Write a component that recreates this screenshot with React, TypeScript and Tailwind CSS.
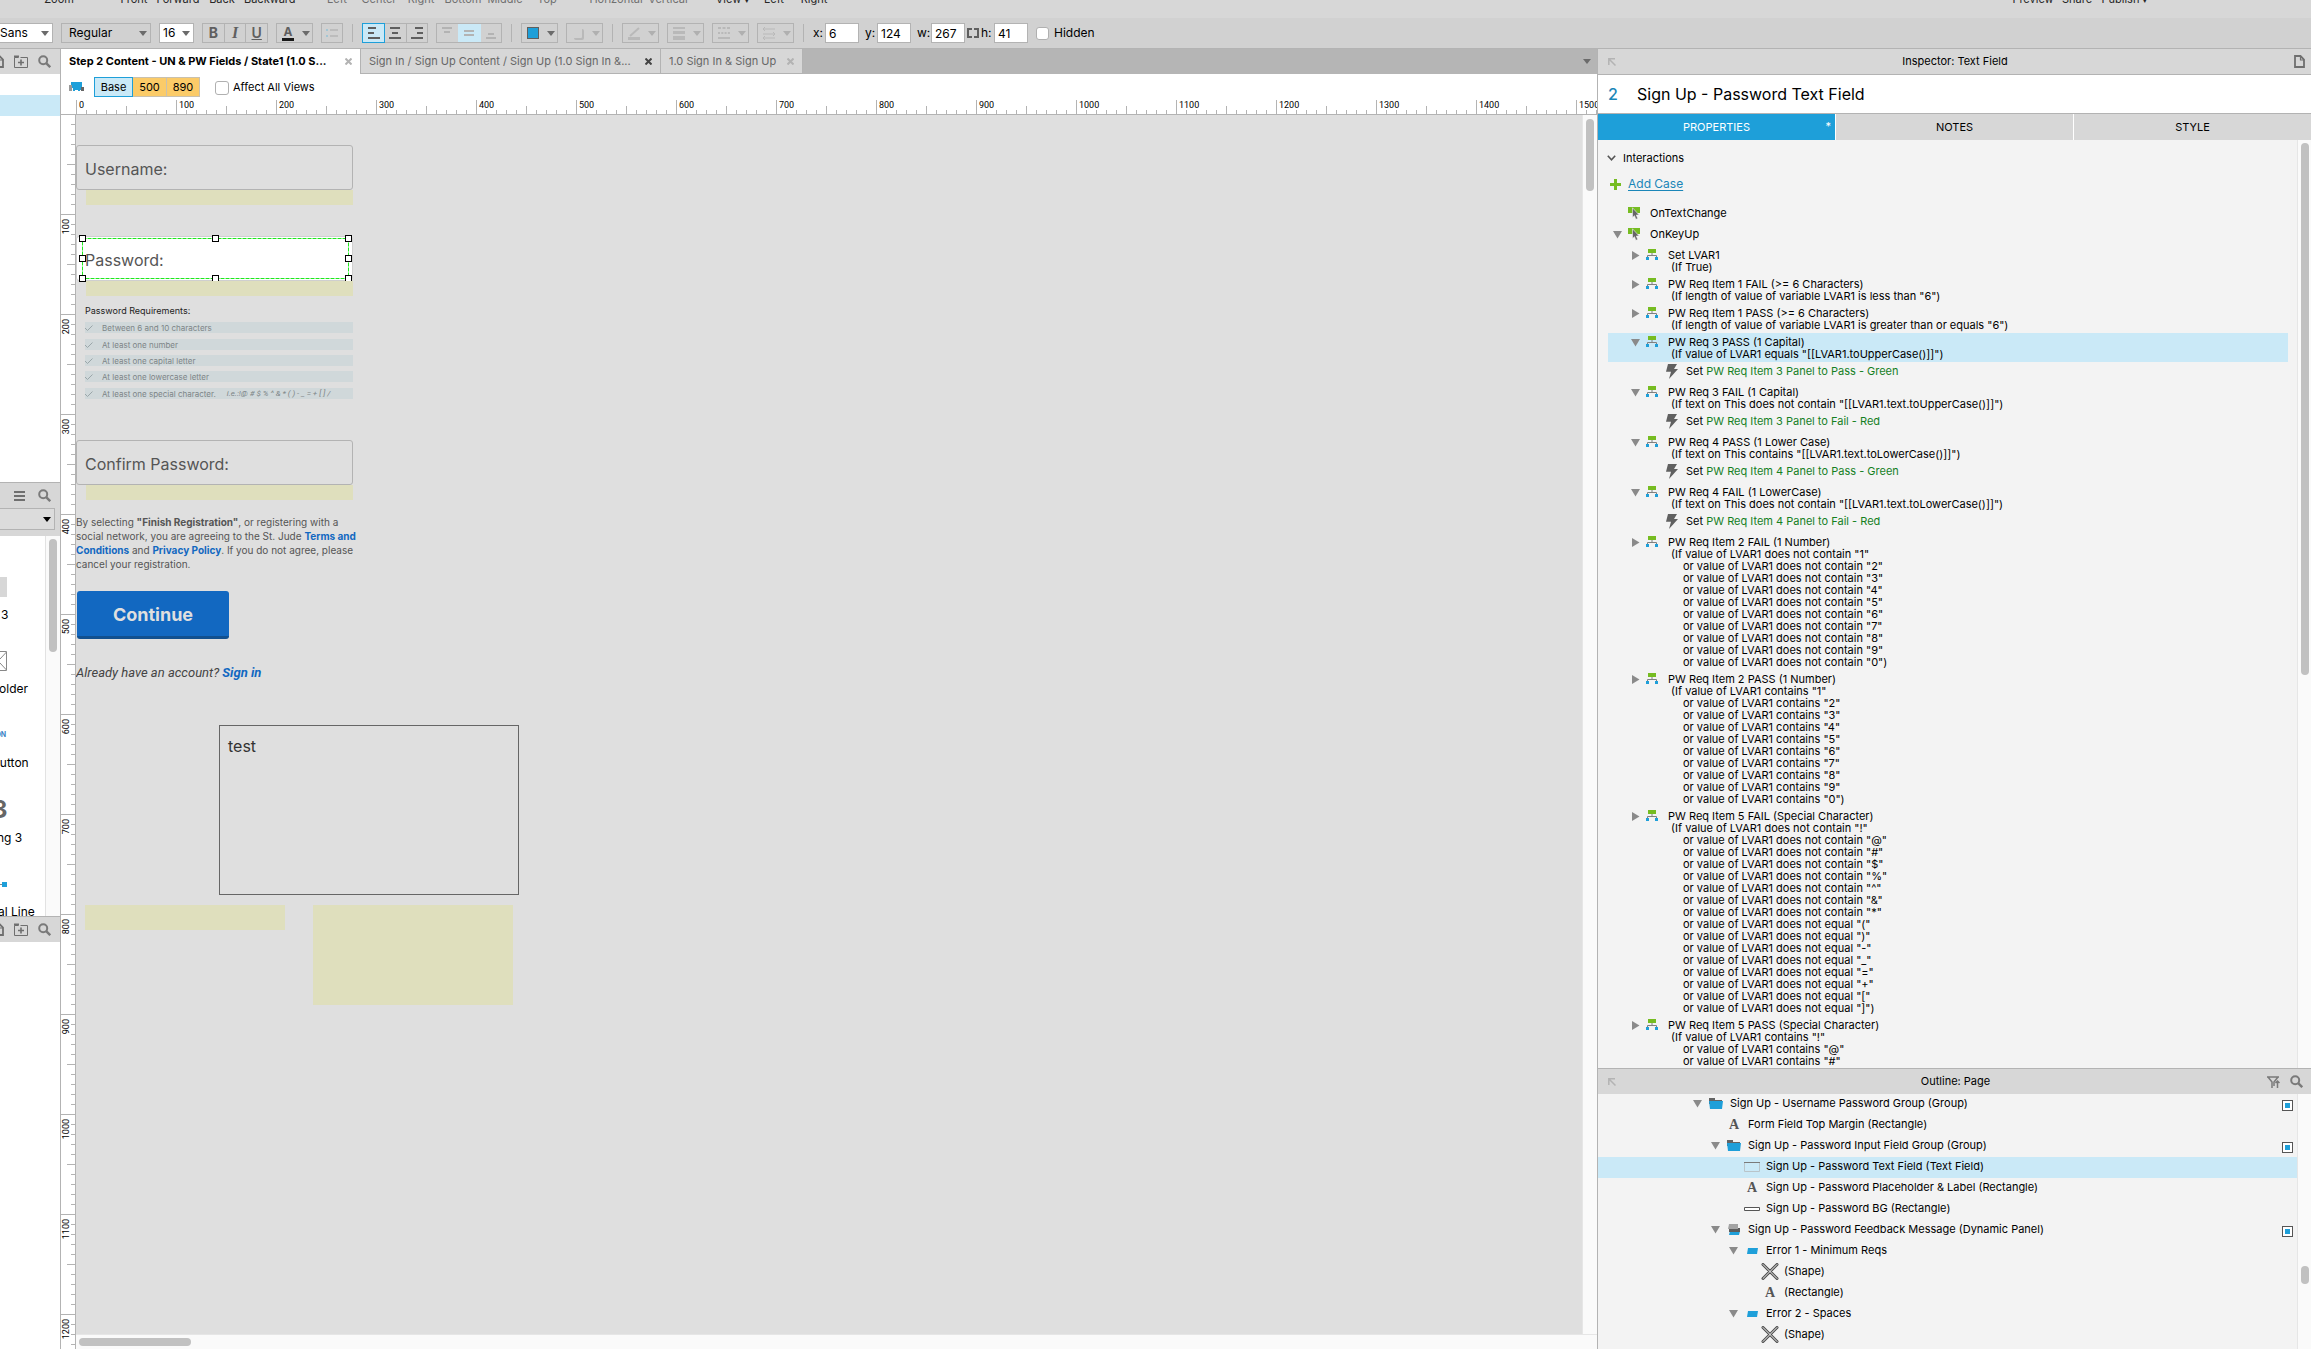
import type { ReactNode } from "react";

const dark = "text-[#262626]";
const muted = "text-[#6f6f6f]";

const rulerX = Array.from({ length: 16 }, (_, i) => i * 100);
const rulerY = Array.from({ length: 13 }, (_, i) => i * 100);

type Case = {
    title: string;
    lines: string[];
    action?: string;
    selected?: boolean;
};

const digits = ["1", "2", "3", "4", "5", "6", "7", "8", "9", "0"];

const cases: Case[] = [
    { title: "Set LVAR1", lines: ["(If True)"] },
    {
        title: "PW Req Item 1 FAIL (>= 6 Characters)",
        lines: ['(If length of value of variable LVAR1 is less than "6")'],
    },
    {
        title: "PW Req Item 1 PASS (>= 6 Characters)",
        lines: ['(If length of value of variable LVAR1 is greater than or equals "6")'],
    },
    {
        title: "PW Req 3 PASS (1 Capital)",
        lines: ['(If value of LVAR1 equals "[[LVAR1.toUpperCase()]]")'],
        action: "PW Req Item 3 Panel to Pass - Green",
        selected: true,
    },
    {
        title: "PW Req 3 FAIL (1 Capital)",
        lines: ['(If text on This does not contain "[[LVAR1.text.toUpperCase()]]")'],
        action: "PW Req Item 3 Panel to Fail - Red",
    },
    {
        title: "PW Req 4 PASS (1 Lower Case)",
        lines: ['(If text on This contains "[[LVAR1.text.toLowerCase()]]")'],
        action: "PW Req Item 4 Panel to Pass - Green",
    },
    {
        title: "PW Req 4 FAIL (1 LowerCase)",
        lines: ['(If text on This does not contain "[[LVAR1.text.toLowerCase()]]")'],
        action: "PW Req Item 4 Panel to Fail - Red",
    },
    {
        title: "PW Req Item 2 FAIL (1 Number)",
        lines: digits.map(
            (d, i) => `${i === 0 ? "(If" : "or"} value of LVAR1 does not contain "${d}"${i === 9 ? ")" : ""}`,
        ),
    },
    {
        title: "PW Req Item 2 PASS (1 Number)",
        lines: digits.map((d, i) => `${i === 0 ? "(If" : "or"} value of LVAR1 contains "${d}"${i === 9 ? ")" : ""}`),
    },
    {
        title: "PW Req Item 5 FAIL (Special Character)",
        lines: [
            '(If value of LVAR1 does not contain "!"',
            ...["@", "#", "$", "%", "^", "&", "*"].map((c) => `or value of LVAR1 does not contain "${c}"`),
            ...["(", ")", "-", "_", "=", "+", "["].map((c) => `or value of LVAR1 does not equal "${c}"`),
            'or value of LVAR1 does not equal "]")',
        ],
    },
    {
        title: "PW Req Item 5 PASS (Special Character)",
        lines: [
            '(If value of LVAR1 contains "!"',
            'or value of LVAR1 contains "@"',
            'or value of LVAR1 contains "#"',
        ],
    },
];

const requirements = [
    { text: "Between 6 and 10 characters", top: "top-[207px]" },
    { text: "At least one number", top: "top-[224px]" },
    { text: "At least one capital letter", top: "top-[240px]" },
    { text: "At least one lowercase letter", top: "top-[256px]" },
    { text: "At least one special character.", top: "top-[273px]", note: "i.e.:!@ # $ % ^ & * ( ) - _ = + [ ] /" },
];

const handles = [
    "left-[3px] top-[120px]",
    "left-[136px] top-[120px]",
    "left-[269px] top-[120px]",
    "left-[3px] top-[140px]",
    "left-[269px] top-[140px]",
    "left-[3px] top-[160px]",
    "left-[136px] top-[160px]",
    "left-[269px] top-[160px]",
];

/* ---------- Icons ---------- */

function Caret({ className = "text-[#6b6b6b]" }: { className?: string }) {
    return (
        <svg className={`pointer-events-none ${className}`} width="8" height="5" viewBox="0 0 8 5" fill="currentColor">
            <path d="M0 0h8L4 5z" />
        </svg>
    );
}

function TreeArrow({ open }: { open?: boolean }) {
    return (
        <svg width="9" height="9" viewBox="0 0 9 9" fill="#8a8a8a" className="shrink-0">
            {open ? <path d="M0 1h9L4.500 8.500z" /> : <path d="M1 0v9L8.500 4.500z" />}
        </svg>
    );
}

function SearchIcon() {
    return (
        <svg width="13" height="13" viewBox="0 0 13 13" fill="none" stroke="#7a7a7a" strokeWidth="2" className="shrink-0">
            <circle cx="5.200" cy="5.200" r="4" />
            <path d="M8.200 8.200l4 4" strokeWidth="2.400" />
        </svg>
    );
}

function FolderPlusIcon() {
    return (
        <svg width="14" height="13" viewBox="0 0 14 13" fill="none" stroke="#6f6f6f" className="shrink-0">
            <path d="M.5 12.500V2.500h4M.5 12.500h13v-10h-7" />
            <path d="M0 1.500h5" strokeWidth="2" />
            <path d="M7 4.500v6M4 7.500h6" strokeWidth="1.600" />
        </svg>
    );
}

function PageIcon() {
    return (
        <svg width="11" height="13" viewBox="0 0 11 13" fill="none" stroke="#6f6f6f" strokeWidth="1.800" className="shrink-0">
            <path d="M1 1h5.500L10 4.500V12H1z" />
            <path d="M6.500 1v4H10" strokeWidth="1.200" />
        </svg>
    );
}

function PopOutIcon() {
    return (
        <svg width="8" height="8" viewBox="0 0 8 8" fill="none" stroke="#b3b3b3" strokeWidth="1.500">
            <path d="M.8 7V.8H7M1 1l6.500 6.500" />
        </svg>
    );
}

function CaseIcon() {
    return (
        <svg width="12" height="11" viewBox="0 0 12 11" className="shrink-0">
            <path d="M2 0h8v4H2z" fill="#76bc21" />
            <path d="M1.500 8V6.500h9V8M6 4v2.500" fill="none" stroke="#808080" />
            <path d="M0 8h3v3H0zM9 8h3v3H9z" fill="#1e9fd9" />
        </svg>
    );
}

function EventIcon() {
    return (
        <svg width="12" height="13" viewBox="0 0 12 13" className="shrink-0">
            <path d="M0 0h12v6H0z" fill="#76bc21" />
            <path
                d="M4.500.8v9.800l2-1.900 1.300 3.600 2-.8-1.500-3.500h2.900z"
                fill="#666"
                stroke="#f3f3f3"
                strokeWidth=".6"
            />
        </svg>
    );
}

function BoltIcon() {
    return (
        <svg width="12" height="15" viewBox="0 0 12 15" fill="#606060" className="shrink-0">
            <path d="M2 0h9L8 5h4L3 15l2-7.200H0z" />
        </svg>
    );
}

function FolderIcon() {
    return (
        <svg width="14" height="11" viewBox="0 0 14 11" className="shrink-0">
            <path d="M0 0h6v2h7v4H0z" fill="#636363" />
            <path d="M0 3h14l-1 8H1z" fill="#1e9fd9" />
        </svg>
    );
}

function ShapeIcon() {
    return (
        <svg width="18" height="17" viewBox="0 0 18 17" className="shrink-0" strokeLinecap="round">
            <path d="M2 1.500l14 14M16 1.500l-14 14" stroke="#4d4d4d" strokeWidth="3" />
            <path d="M2 1.500l14 14M16 1.500l-14 14" stroke="#f3f3f3" strokeWidth="1" />
        </svg>
    );
}

function PanelIcon() {
    return (
        <svg width="12" height="11" viewBox="0 0 12 11" className="shrink-0">
            <path d="M2 7h10l-1 4H1z" fill="#1e9fd9" />
            <path d="M1 4h11v4H1z" fill="#5c5c5c" />
            <path d="M1 0h9v5H0z" fill="#a3a3a3" />
        </svg>
    );
}

function StateIcon() {
    return (
        <svg width="11" height="6" viewBox="0 0 11 6" className="shrink-0">
            <path d="M1 0h10l-1 6H0z" fill="#1e9fd9" />
        </svg>
    );
}

function TextFieldIcon() {
    return (
        <svg width="16" height="10" viewBox="0 0 16 10" className="shrink-0" fill="none">
            <path d="M.5 0v9.500h15V0" stroke="#b9c4c9" />
            <path d="M0 .5h16" stroke="#7a7a7a" />
        </svg>
    );
}

function RectIcon() {
    return (
        <svg width="16" height="4" viewBox="0 0 16 4" className="shrink-0">
            <path d="M.5.5h15v3H.5z" fill="#fff" stroke="#555" />
        </svg>
    );
}

function LetterIcon() {
    return <span className="font-['Liberation_Serif'] text-sm leading-none font-bold text-[#555]">A</span>;
}

/* ---------- Toolbar parts ---------- */

function Separator() {
    return <div className="mx-px h-[18px] w-px bg-[#b3b3b3]" />;
}

function Drop({ children, label }: { children: ReactNode; label: string }) {
    const off = label !== "Text color" && label !== "Fill color";
    return (
        <button
            aria-label={label}
            className="flex h-5 w-[37px] items-center justify-between border border-[#b3b3b3] pr-[2px] pl-1"
        >
            {children}
            <Caret className={off ? "text-[#b0b0b0]" : "text-[#6b6b6b]"} />
        </button>
    );
}

function Picker({ value, label, box }: { value: string; label: string; box: string }) {
    return (
        <div className={`relative flex h-5 items-center border border-[#b3b3b3] ${box}`}>
            <select aria-label={label} className="h-full w-full appearance-none bg-transparent text-xs outline-none">
                <option>{value}</option>
            </select>
            <Caret className="absolute right-[3px] text-[#6b6b6b]" />
        </div>
    );
}

function AlignIcon({ d }: { d: string }) {
    return (
        <svg width="12" height="12" viewBox="0 0 12 12" fill="none" stroke="currentColor" strokeWidth="2">
            <path d={d} />
        </svg>
    );
}

function NumberBox({ id, value, width }: { id: string; value: string; width: string }) {
    return (
        <>
            <label htmlFor={id} className={`text-xs ${width}`}>
                {id}:
            </label>
            <input
                id={id}
                defaultValue={value}
                className="h-5 w-[34px] border border-[#b3b3b3] bg-white pl-[3px] text-xs outline-none"
            />
        </>
    );
}

function Toolbar() {
    return (
        <div className="flex h-[31px] shrink-0 items-center gap-2 overflow-hidden border-b border-[#b3b3b3] bg-[#d1d1d1]">
            <Picker value="Sans" label="Font" box="w-[53px] bg-white border-l-0" />
            <Picker value="Regular" label="Font style" box="w-[90px] pl-[7px]" />
            <Picker value="16" label="Font size" box="w-[35px] bg-white pl-[3px]" />
            <div className="flex h-5 w-[66px] divide-x divide-[#b3b3b3] border border-[#b3b3b3] text-sm leading-none text-[#5f5f5f]">
                <button className="flex-1 font-bold">B</button>
                <button className="flex-1 font-['Liberation_Serif'] text-base leading-none font-bold italic">I</button>
                <button className="flex-1 font-semibold underline">U</button>
            </div>
            <Drop label="Text color">
                <span className="ml-[1px] w-3 border-b-3 border-[#1a1a1a] text-xs leading-[13px] font-bold text-[#5f5f5f]">
                    A
                </span>
            </Drop>
            <button aria-label="Bullets" className="flex h-5 w-[22px] items-center justify-center border border-[#b3b3b3]">
                <svg width="12" height="10" viewBox="0 0 12 10" fill="none" stroke="#b5b5b5" strokeWidth="1.500">
                    <path d="M4 2h8M4 8h8" />
                    <path d="M0 2h2M0 8h2" stroke="#a3c6d4" strokeWidth="2" />
                </svg>
            </button>
            <Separator />
            <div className="flex h-5 w-[66px] border border-[#b3b3b3] text-[#5f5f5f]">
                <button
                    aria-label="Align left"
                    className="-my-px -ml-px flex w-[23px] items-center justify-center border border-[#1e9fd9] bg-[#cae9f7]"
                >
                    <AlignIcon d="M0 1h8M0 6h6M0 11h12" />
                </button>
                <button aria-label="Align center" className="flex flex-1 items-center justify-center">
                    <AlignIcon d="M1 1h10M3 6h6M0 11h12" />
                </button>
                <button aria-label="Align right" className="flex flex-1 items-center justify-center border-l border-[#b3b3b3]">
                    <AlignIcon d="M4 1h8M6 6h6M0 11h12" />
                </button>
            </div>
            <div className="flex h-5 w-[66px] border border-[#b3b3b3] text-[#b3b3b3]">
                <button aria-label="Align top" className="flex flex-1 items-center justify-center">
                    <AlignIcon d="M1 1h10M3 5h6" />
                </button>
                <button aria-label="Align middle" className="flex w-[23px] items-center justify-center bg-[#cae9f7]">
                    <AlignIcon d="M1 4h10M1 8h10" />
                </button>
                <button aria-label="Align bottom" className="flex flex-1 items-center justify-center">
                    <AlignIcon d="M3 7h6M1 11h10" />
                </button>
            </div>
            <Separator />
            <Drop label="Fill color">
                <span className="ml-[1px] size-3 border border-[#5f5f5f] bg-[#1e9fd9]" />
            </Drop>
            <Drop label="Shadow">
                <svg width="14" height="13" viewBox="0 0 14 13">
                    <rect x="3" y="2" width="10" height="11" rx="2" fill="#b9b9b9" />
                    <rect x="1" y="0" width="10" height="11" rx="1" fill="#d1d1d1" />
                </svg>
            </Drop>
            <Separator />
            <Drop label="Line color">
                <svg width="14" height="13" viewBox="0 0 14 13" fill="none" stroke="#b9b9b9">
                    <path d="M1 11.500h12" strokeWidth="3" />
                    <path d="M3 9l9-8" strokeWidth="2" />
                </svg>
            </Drop>
            <Drop label="Line width">
                <svg width="14" height="13" viewBox="0 0 14 13" fill="#b9b9b9">
                    <path d="M1 0h12v2H1zM1 4h12v3H1zM1 9h12v4H1z" />
                </svg>
            </Drop>
            <Drop label="Line style">
                <svg width="14" height="13" viewBox="0 0 14 13" fill="none" stroke="#b9b9b9" strokeWidth="2">
                    <path d="M1 1h12" strokeDasharray="3 1.500" />
                    <path d="M1 6h12" strokeDasharray="2 1.300" />
                    <path d="M1 11h12" />
                </svg>
            </Drop>
            <Drop label="Arrow style">
                <svg width="14" height="13" viewBox="0 0 14 13" fill="none" stroke="#b9b9b9">
                    <path d="M1 2h12M1 7h12M1 11h12M3 0L1 2l2 2M11 5l2 2-2 2M3 9l-2 2 2 2" />
                </svg>
            </Drop>
            <Separator />
            <div className="flex items-center">
                <NumberBox id="x" value="6" width="w-3" />
                <div className="w-[6px]" />
                <NumberBox id="y" value="124" width="w-3" />
                <div className="w-[6px]" />
                <NumberBox id="w" value="267" width="w-[14px]" />
                <svg width="12" height="10" viewBox="0 0 12 10" fill="none" stroke="#5f5f5f" strokeWidth="2" className="mx-[2px] shrink-0">
                    <path d="M5 1H1v8h4M7 1h4v8H7" />
                </svg>
                <NumberBox id="h" value="41" width="w-[13px]" />
            </div>
            <label className="flex items-center gap-[5px] text-xs">
                <input
                    type="checkbox"
                    className="size-[13px] appearance-none rounded-[3px] border border-[#b0b0b0] bg-white"
                />
                Hidden
            </label>
        </div>
    );
}

function MenuLabels() {
    return (
        <div className="flex h-[18px] shrink-0 overflow-hidden bg-[#d7d7d7] text-[11px] leading-[14px]">
            <div className={`-mt-2 ml-[37px] flex text-center ${dark}`}>
                <span className="mr-[31px] w-11">Zoom</span>
                <span className="w-11">Front</span>
                <span className="w-11">Forward</span>
                <span className="w-11">Back</span>
                <span className="w-[50px]">Backward</span>
            </div>
            <div className={`-mt-2 ml-[22px] flex text-center ${muted}`}>
                {["Left", "Center", "Right", "Bottom", "Middle", "Top"].map((t) => (
                    <span key={t} className="w-[42px]">
                        {t}
                    </span>
                ))}
                <span className="ml-5 w-14">Horizontal</span>
                <span className="w-12">Vertical</span>
            </div>
            <div className={`-mt-2 ml-5 flex text-center ${dark}`}>
                <span className="w-[42px]">View ▾</span>
                <span className="w-10">Left</span>
                <span className="w-10">Right</span>
            </div>
            <div className={`-mt-2 mr-[160px] ml-auto flex text-center ${dark}`}>
                <span className="w-11">Preview</span>
                <span className="w-11">Share</span>
                <span className="w-[52px]">Publish ▾</span>
            </div>
        </div>
    );
}

/* ---------- Left side panels ---------- */

function LeftPanel() {
    return (
        <aside className="flex w-[61px] shrink-0 flex-col overflow-hidden border-r border-[#b3b3b3] bg-white text-xs">
            <div className="flex h-[25px] shrink-0 items-center justify-end gap-[10px] bg-[#d7d7d7] pr-[9px]">
                <PageIcon />
                <FolderPlusIcon />
                <SearchIcon />
            </div>
            <div className="mt-[21px] h-[21px] shrink-0 bg-[#cae9f7]" />
            <div className="h-[366px] shrink-0" />
            <div className="flex h-[54px] shrink-0 flex-col border-t border-[#b3b3b3] bg-[#d7d7d7]">
                <div className="flex h-[25px] items-center justify-end gap-[13px] pr-[9px]">
                    <svg width="11" height="10" viewBox="0 0 11 10" fill="none" stroke="#6f6f6f" strokeWidth="1.800">
                        <path d="M0 1h11M0 5h11M0 9h11" />
                    </svg>
                    <SearchIcon />
                </div>
                <button
                    aria-label="Library"
                    className="flex h-[22px] w-[55px] items-center justify-end border border-l-0 border-[#b3b3b3] bg-[#dcdcdc] pr-[3px]"
                >
                    <Caret className="text-black" />
                </button>
            </div>
            <div className="flex h-[380px] shrink-0">
                <div className="flex w-[45px] shrink-0 flex-col items-start overflow-hidden leading-4 whitespace-nowrap">
                    <div className="mt-[41px] h-5 w-[7px] shrink-0 bg-[#d7d7d7]" />
                    <p className="mt-[10px] ml-px">3</p>
                    <svg width="7" height="20" viewBox="0 0 7 20" fill="none" stroke="#888" className="mt-[28px] shrink-0">
                        <path d="M0 .5h6.500v19H0M0 8l6.500-7M0 12l6.500 7" />
                    </svg>
                    <p className="mt-[10px] -ml-2">holder</p>
                    <p className="mt-[32px] -ml-[9px] text-[7px] leading-[12px] font-bold text-[#3b82c4]">TON</p>
                    <p className="mt-[14px] -ml-2">Button</p>
                    <p className="mt-[27px] -ml-2 text-2xl leading-6 font-bold text-[#666]">3</p>
                    <p className="mt-[8px] -ml-[3px]">ng 3</p>
                    <div className="mt-[36px] flex items-center">
                        <div className="h-px w-[2px] bg-[#888]" />
                        <div className="size-[5px] bg-[#1e9fd9]" />
                    </div>
                    <p className="mt-[17px] -ml-[2px]">al Line</p>
                </div>
                <div className="w-[15px] border-l border-[#e2e2e2] bg-[#fafafa] pt-[3px] pl-[3px]">
                    <div className="h-[113px] w-2 rounded-full bg-[#c1c1c1]" />
                </div>
            </div>
            <div className="flex h-[26px] shrink-0 items-center justify-end gap-[10px] border-t border-[#b3b3b3] bg-[#d7d7d7] pr-[9px]">
                <PageIcon />
                <FolderPlusIcon />
                <SearchIcon />
            </div>
        </aside>
    );
}

/* ---------- Centre: tabs, rulers, canvas ---------- */

function Tab({ text, active, strong, width }: { text: string; active?: boolean; strong?: boolean; width: string }) {
    return (
        <div
            className={`flex items-center justify-between border-r border-[#b3b3b3] pr-2 pl-2 ${width} ${
                active ? "bg-white font-bold text-black" : "border-b bg-[#d7d7d7] text-[#666]"
            }`}
        >
            <button className="whitespace-nowrap">{text}</button>
            <svg
                width="7"
                height="7"
                viewBox="0 0 7 7"
                fill="none"
                stroke={strong ? "#444" : "#b3b3b3"}
                strokeWidth="2"
                className="shrink-0"
            >
                <path d="M.5.5l6 6M6.500.5l-6 6" />
            </svg>
        </div>
    );
}

function HorizontalRuler() {
    return (
        <div className="ml-[15px] flex h-[14px] overflow-hidden font-[Roboto] text-[9px] leading-[10px]">
            {rulerX.map((n) => (
                <div key={n} className="relative w-[100px] shrink-0 border-l border-[#b3b3b3] pl-[2px]">
                    {n}
                    <svg width="99" height="14" className="absolute top-0 left-0" stroke="#b3b3b3">
                        <path d="M9.500 10v4M19.500 10v4M29.500 10v4M39.500 10v4M49.500 6v8M59.500 10v4M69.500 10v4M79.500 10v4M89.500 10v4" />
                    </svg>
                </div>
            ))}
        </div>
    );
}

function VerticalRuler() {
    return (
        <div className="w-[14px] shrink-0 overflow-hidden bg-white font-[Roboto] text-[9px] leading-[10px]">
            {rulerY.map((n) => (
                <div key={n} className="relative h-[100px] border-t border-[#b3b3b3]">
                    {n > 0 && <span className="mt-1 block rotate-180 [writing-mode:vertical-rl]">{n}</span>}
                    <svg width="14" height="99" className="absolute top-0 left-0" stroke="#b3b3b3">
                        <path d="M10 9.500h4M10 19.500h4M10 29.500h4M10 39.500h4M6 49.500h8M10 59.500h4M10 69.500h4M10 79.500h4M10 89.500h4" />
                    </svg>
                </div>
            ))}
        </div>
    );
}

function Canvas() {
    const field =
        "absolute left-0 h-[45px] w-[277px] rounded-[3px] border pt-[2px] pl-2 text-base text-[#555] outline-none";
    return (
        <div className="relative min-w-0 flex-1 overflow-hidden bg-[#dfdfdf]">
            <input aria-label="Username" defaultValue="Username:" className={`${field} top-[30px] border-[#b3b3b3]`} />
            <div className="absolute top-[75px] left-[10px] h-[15px] w-[267px] bg-[#dfdfbd]" />

            {/* Selected password field with its handles */}
            <input
                aria-label="Password"
                defaultValue="Password:"
                className={`${field} top-[121px] border-[#cfcfcf] bg-white`}
            />
            <svg width="267" height="41" className="absolute top-[123px] left-[6px]" fill="none" stroke="#1fe81f">
                <rect x=".5" y=".5" width="266" height="40" strokeDasharray="4 1" />
            </svg>
            {handles.map((h) => (
                <div key={h} className={`absolute size-[7px] border border-black bg-white ${h}`} />
            ))}
            <div className="absolute top-[166px] left-[10px] h-[15px] w-[267px] bg-[#dfdfbd]" />

            <p className="absolute top-[189px] left-[9px] text-[9px] leading-[14px] text-[#222]">Password Requirements:</p>
            {requirements.map((r) => (
                <div
                    key={r.text}
                    className={`absolute left-[9px] flex h-[11px] w-[268px] items-center bg-[#d0d8da] pt-px text-[8px] leading-[10px] whitespace-nowrap text-[#7d8587] ${r.top}`}
                >
                    <svg width="8" height="6" viewBox="0 0 8 6" fill="none" stroke="#9aa6a9" className="mr-[9px]">
                        <path d="M0 3l2.500 2.500L7.500.5" />
                    </svg>
                    {r.text}
                    {r.note && <span className="ml-[11px] font-[Roboto] italic">{r.note}</span>}
                </div>
            ))}

            <input
                aria-label="Confirm password"
                defaultValue="Confirm Password:"
                className={`${field} top-[325px] border-[#b3b3b3]`}
            />
            <div className="absolute top-[370px] left-[10px] h-[15px] w-[267px] bg-[#dfdfbd]" />

            <p className="absolute top-[400px] left-0 text-[10px] leading-[14px] whitespace-nowrap text-[#555]">
                By selecting <b>"Finish Registration"</b>, or registering with a
                <br />
                social network, you are agreeing to the St. Jude{" "}
                <a href="#terms" className="font-bold text-[#1268c1]">
                    Terms and
                    <br />
                    Conditions
                </a>{" "}
                and{" "}
                <a href="#privacy" className="font-bold text-[#1268c1]">
                    Privacy Policy
                </a>
                . If you do not agree, please
                <br />
                cancel your registration.
            </p>

            <button className="absolute top-[476px] left-[1px] h-12 w-[152px] rounded-[3px] border-b-3 border-[#11508f] bg-[#1268c1] pt-[3px] text-lg font-bold text-[#dfdfdf]">
                Continue
            </button>
            <p className="absolute top-[549px] left-0 font-[Roboto] text-[13px] leading-[18px] text-[#444] italic">
                Already have an account?{" "}
                <a href="#signin" className="font-bold text-[#1268c1]">
                    Sign in
                </a>
            </p>

            <textarea
                aria-label="Test"
                defaultValue="test"
                className="absolute top-[610px] left-[143px] h-[170px] w-[300px] resize-none border border-[#666] px-2 pt-2 text-base text-[#333] outline-none"
            />
            <div className="absolute top-[790px] left-[9px] h-[25px] w-[200px] bg-[#dfdfbd]" />
            <div className="absolute top-[790px] left-[237px] h-[100px] w-[200px] bg-[#dfdfbd]" />
        </div>
    );
}

function Workspace() {
    return (
        <main className="flex min-w-0 flex-1 flex-col bg-white">
            <div className="flex h-[25px] shrink-0 bg-[#b5b5b5] text-[11px]">
                <Tab active width="w-[300px]" text="Step 2 Content - UN & PW Fields / State1 (1.0 S..." />
                <Tab strong width="w-[300px]" text="Sign In / Sign Up Content / Sign Up (1.0 Sign In &..." />
                <Tab width="w-[142px]" text="1.0 Sign In & Sign Up" />
                <button aria-label="All tabs" className="mr-[6px] ml-auto">
                    <Caret />
                </button>
            </div>
            <div className="flex h-[26px] shrink-0 items-center pl-2 text-[11px]">
                <svg width="15" height="10" viewBox="0 0 15 10">
                    <path d="M2 0h11v6H2z" fill="#1e9fd9" />
                    <path d="M4 6h8v2H4zM4 8h2v1H4zM9 8h2v1H9z" fill="#1e9fd9" />
                    <path d="M0 3h3v6H0z" fill="#999" />
                    <path d="M12 5h3v4h-3z" fill="#666" />
                </svg>
                <div className="ml-[10px] flex h-5 text-center">
                    <button className="w-[39px] border border-[#1e9fd9] bg-[#cae9f7]">Base</button>
                    <button className="w-[34px] border-y border-r border-[#c9c1ae] bg-[#fbcb68]">500</button>
                    <button className="w-[33px] border-y border-r border-[#c9c1ae] bg-[#fbcb68]">890</button>
                </div>
                <label className="ml-[15px] flex items-center gap-1 pt-px">
                    <input
                        type="checkbox"
                        className="size-[14px] appearance-none rounded-[3px] border border-[#b0b0b0] bg-white"
                    />
                    Affect All Views
                </label>
            </div>
            <HorizontalRuler />
            <div className="flex min-h-0 flex-1">
                <VerticalRuler />
                <div className="flex min-w-0 flex-1 flex-col border-t border-l border-[#b3b3b3]">
                    <div className="flex min-h-0 flex-1">
                        <Canvas />
                        <div className="w-[15px] shrink-0 border-l border-[#e6e6e6] bg-[#fafafa] pt-1 pl-[3px]">
                            <div className="h-[72px] w-2 rounded-full bg-[#c1c1c1]" />
                        </div>
                    </div>
                    <div className="h-[15px] shrink-0 border-t border-[#e6e6e6] bg-[#fafafa] pt-[3px] pl-[3px]">
                        <div className="h-2 w-28 rounded-full bg-[#c1c1c1]" />
                    </div>
                </div>
            </div>
        </main>
    );
}

/* ---------- Right: inspector and outline ---------- */

function CaseRow({ item }: { item: Case }) {
    const open = Boolean(item.action);
    return (
        <li>
            <div
                className={`mr-[9px] ml-[10px] flex items-start pt-[3px] pb-[2px] pl-[23px] leading-3 ${
                    item.selected ? "bg-[#cae9f7]" : ""
                }`}
            >
                <div className="mt-[2px]">
                    <TreeArrow open={open} />
                </div>
                <div className="mr-[10px] ml-[6px]">
                    <CaseIcon />
                </div>
                <div className="whitespace-nowrap">
                    <p>{item.title}</p>
                    {item.lines.map((line) => (
                        <p key={line} className={line.startsWith("or") ? "pl-[15px]" : "pl-[3px]"}>
                            {line}
                        </p>
                    ))}
                </div>
            </div>
            {item.action && (
                <div className="flex h-[21px] items-center gap-2 pb-[2px] pl-[68px]">
                    <BoltIcon />
                    <p>
                        Set <span className="text-[#15801f]">{item.action}</span>
                    </p>
                </div>
            )}
        </li>
    );
}

function Inspector() {
    return (
        <section className="flex min-h-0 flex-1 flex-col">
            <div className="flex h-[26px] shrink-0 items-center border-b border-[#b3b3b3] bg-[#d7d7d7] pr-[6px] pl-[10px]">
                <PopOutIcon />
                <h2 className="flex-1 text-center">Inspector: Text Field</h2>
                <PageIcon />
            </div>
            <div className="flex h-[39px] shrink-0 items-center border-b border-[#b3b3b3] bg-white pb-px pl-[10px] text-base">
                <span className="w-[29px] font-medium text-[#1a86b8]">2</span>
                <h1>Sign Up - Password Text Field</h1>
            </div>
            <div className="flex h-[26px] shrink-0 divide-x divide-white bg-[#d7d7d7]">
                <button className="relative flex-1 bg-[#1e9fd9] text-white">
                    PROPERTIES<span className="absolute top-1 right-1">*</span>
                </button>
                <button className="flex-1">NOTES</button>
                <button className="flex-1">STYLE</button>
            </div>
            <div className="flex min-h-0 flex-1 overflow-hidden">
                <div className="min-w-0 flex-1 overflow-hidden pt-2">
                    <div className="flex h-5 items-center pl-[9px]">
                        <svg width="9" height="6" viewBox="0 0 9 6" fill="none" stroke="#555" strokeWidth="1.600">
                            <path d="M.8.8l3.700 4L8.200.8" />
                        </svg>
                        <h3 className="ml-[7px]">Interactions</h3>
                    </div>
                    <div className="mt-[6px] flex h-5 items-center gap-[7px] pl-3">
                        <svg width="11" height="11" viewBox="0 0 11 11" fill="none" stroke="#76bc21" strokeWidth="3">
                            <path d="M5.500 0v11M0 5.500h11" />
                        </svg>
                        <a href="#add-case" className="text-xs text-[#1a86b8] underline underline-offset-2">
                            Add Case
                        </a>
                    </div>
                    <div className="mt-[10px] flex h-[21px] items-center gap-[10px] pb-[2px] pl-[30px]">
                        <EventIcon />
                        OnTextChange
                    </div>
                    <div className="flex h-[21px] items-center pb-[2px] pl-[15px]">
                        <TreeArrow open />
                        <div className="mr-[10px] ml-[6px]">
                            <EventIcon />
                        </div>
                        OnKeyUp
                    </div>
                    <ul>
                        {cases.map((item) => (
                            <CaseRow key={item.title} item={item} />
                        ))}
                    </ul>
                </div>
                <div className="w-[14px] shrink-0 border-l border-[#e6e6e6] bg-[#fafafa] pt-[3px] pl-[3px]">
                    <div className="h-[532px] w-2 rounded-full bg-[#c1c1c1]" />
                </div>
            </div>
        </section>
    );
}

function OutlineRow({
    indent,
    icon,
    text,
    open,
    target,
    selected,
}: {
    indent: string;
    icon: ReactNode;
    text: string;
    open?: boolean;
    target?: boolean;
    selected?: boolean;
}) {
    return (
        <li className={`flex h-[21px] items-center pr-1 pb-[2px] ${indent} ${selected ? "bg-[#cae9f7]" : ""}`}>
            <div className="w-3 shrink-0">{open && <TreeArrow open />}</div>
            <div className="flex w-[22px] shrink-0 justify-center">{icon}</div>
            <span className="ml-[3px] flex-1 whitespace-nowrap">{text}</span>
            {target && (
                <div className="mt-1 flex size-[11px] items-center justify-center border border-[#555] bg-white">
                    <div className="size-[5px] bg-[#1e9fd9]" />
                </div>
            )}
        </li>
    );
}

function Outline() {
    return (
        <section className="flex h-[281px] shrink-0 flex-col border-t border-[#b3b3b3]">
            <div className="flex h-[25px] shrink-0 items-center bg-[#d7d7d7] pr-2 pl-[10px]">
                <PopOutIcon />
                <h2 className="flex-1 pl-7 text-center">Outline: Page</h2>
                <svg width="14" height="12" viewBox="0 0 14 12" fill="none" stroke="#7a7a7a" strokeWidth="1.500">
                    <path d="M0 1h12M1 1l4 5v6M11 1L7 6v4M10.500 12V5M8.500 7l2-2 2 2" />
                </svg>
                <div className="ml-[9px]">
                    <SearchIcon />
                </div>
            </div>
            <div className="flex min-h-0 flex-1 overflow-hidden">
                <ul className="min-w-0 flex-1 overflow-hidden">
                    <OutlineRow open target indent="pl-[95px]" icon={<FolderIcon />} text="Sign Up - Username Password Group (Group)" />
                    <OutlineRow indent="pl-[113px]" icon={<LetterIcon />} text="Form Field Top Margin (Rectangle)" />
                    <OutlineRow open target indent="pl-[113px]" icon={<FolderIcon />} text="Sign Up - Password Input Field Group (Group)" />
                    <OutlineRow selected indent="pl-[131px]" icon={<TextFieldIcon />} text="Sign Up - Password Text Field (Text Field)" />
                    <OutlineRow indent="pl-[131px]" icon={<LetterIcon />} text="Sign Up - Password Placeholder & Label (Rectangle)" />
                    <OutlineRow indent="pl-[131px]" icon={<RectIcon />} text="Sign Up - Password BG (Rectangle)" />
                    <OutlineRow open target indent="pl-[113px]" icon={<PanelIcon />} text="Sign Up - Password Feedback Message (Dynamic Panel)" />
                    <OutlineRow open indent="pl-[131px]" icon={<StateIcon />} text="Error 1 - Minimum Reqs" />
                    <OutlineRow indent="pl-[149px]" icon={<ShapeIcon />} text="(Shape)" />
                    <OutlineRow indent="pl-[149px]" icon={<LetterIcon />} text="(Rectangle)" />
                    <OutlineRow open indent="pl-[131px]" icon={<StateIcon />} text="Error 2 - Spaces" />
                    <OutlineRow indent="pl-[149px]" icon={<ShapeIcon />} text="(Shape)" />
                </ul>
                <div className="w-[14px] shrink-0 border-l border-[#e6e6e6] bg-[#fafafa] pt-[172px] pl-[3px]">
                    <div className="h-[18px] w-2 rounded-full bg-[#c1c1c1]" />
                </div>
            </div>
        </section>
    );
}

export default function App() {
    return (
        <div className="flex h-screen flex-col overflow-hidden bg-white font-[Inter,sans-serif] text-black">
            <MenuLabels />
            <Toolbar />
            <div className="flex min-h-0 flex-1">
                <LeftPanel />
                <Workspace />
                <aside className="flex w-[714px] shrink-0 flex-col border-l border-[#b3b3b3] bg-[#f3f3f3] text-[11px]">
                    <Inspector />
                    <Outline />
                </aside>
            </div>
        </div>
    );
}
